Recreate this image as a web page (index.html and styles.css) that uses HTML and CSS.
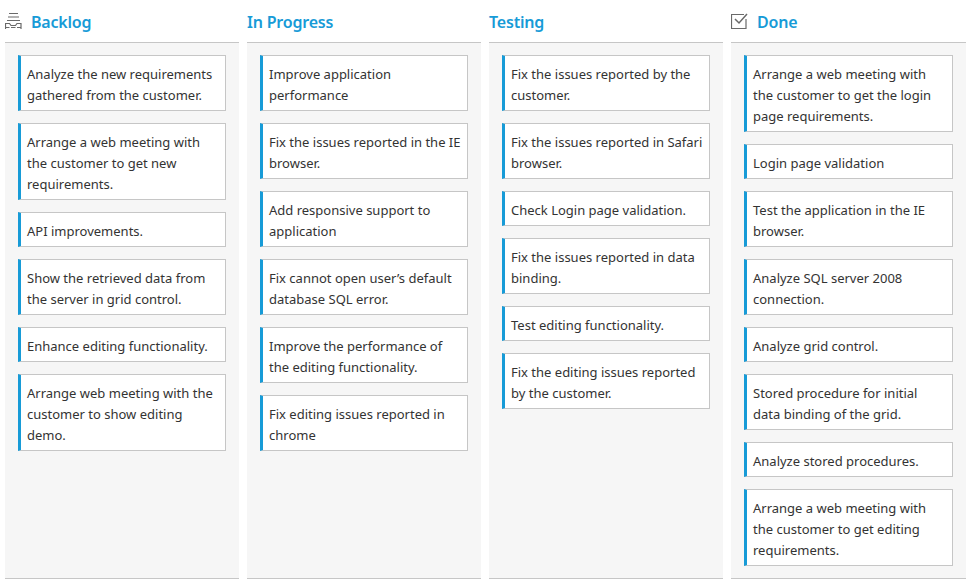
FILE: index.html
```
<!DOCTYPE html>
<html lang="en">
<head>
<meta charset="utf-8">
<title>Kanban board</title>
<link rel="stylesheet" href="styles.css">
</head>
<body>
<main class="board">
  <section class="column">
    <h2 class="title"><svg class="icon" width="18" height="18" viewBox="0 0 18 18"><path d="M4 .5h9M3 4h11M2 7.500h13M.5 16v-5.500h4l1.500 2h4.500l1.500-2h4v5.500M.5 14.500h4M12 14.500h4M6 14.500h4.500"/></svg>Backlog</h2>
    <div class="cards">
      <article class="card">Analyze the new requirements<br>gathered from the customer.</article>
      <article class="card">Arrange a web meeting with<br>the customer to get new<br>requirements.</article>
      <article class="card">API improvements.</article>
      <article class="card">Show the retrieved data from<br>the server in grid control.</article>
      <article class="card">Enhance editing functionality.</article>
      <article class="card">Arrange web meeting with the<br>customer to show editing<br>demo.</article>
    </div>
  </section>
  <section class="column">
    <h2 class="title">In Progress</h2>
    <div class="cards">
      <article class="card">Improve application<br>performance</article>
      <article class="card">Fix the issues reported in the IE<br>browser.</article>
      <article class="card">Add responsive support to<br>application</article>
      <article class="card">Fix cannot open user’s default<br>database SQL error.</article>
      <article class="card">Improve the performance of<br>the editing functionality.</article>
      <article class="card">Fix editing issues reported in<br>chrome</article>
    </div>
  </section>
  <section class="column">
    <h2 class="title">Testing</h2>
    <div class="cards">
      <article class="card">Fix the issues reported by the<br>customer.</article>
      <article class="card">Fix the issues reported in Safari<br>browser.</article>
      <article class="card">Check Login page validation.</article>
      <article class="card">Fix the issues reported in data<br>binding.</article>
      <article class="card">Test editing functionality.</article>
      <article class="card">Fix the editing issues reported<br>by the customer.</article>
    </div>
  </section>
  <section class="column">
    <h2 class="title"><svg class="icon" width="18" height="18" viewBox="0 0 18 18"><path d="M13 1.500H.5v14h14.500V6"/><path class="tick" d="M4 6l4 4L16 1"/></svg>Done</h2>
    <div class="cards">
      <article class="card">Arrange a web meeting with<br>the customer to get the login<br>page requirements.</article>
      <article class="card">Login page validation</article>
      <article class="card">Test the application in the IE<br>browser.</article>
      <article class="card">Analyze SQL server 2008<br>connection.</article>
      <article class="card">Analyze grid control.</article>
      <article class="card">Stored procedure for initial<br>data binding of the grid.</article>
      <article class="card">Analyze stored procedures.</article>
      <article class="card">Arrange a web meeting with<br>the customer to get editing<br>requirements.</article>
    </div>
  </section>
</main>
</body>
</html>
```
FILE: styles.css
```
* { box-sizing: border-box; }
body {
  margin: 0;
  background: #fff;
  color: #333;
  font-family: "Segoe UI", "Noto Sans", sans-serif;
}
.board {
  display: grid;
  grid-template-columns: 234px 234px 234px 235px;
  column-gap: 8px;
  height: 579px;
  padding-left: 5px;
}
.column {
  display: flex;
  flex-direction: column;
}
.title {
  display: flex;
  align-items: center;
  height: 42px;
  margin: 0;
  padding-top: 2px;
  color: #179bd7;
  font-size: 16px;
  font-weight: 600;
  letter-spacing: -0.2px;
}
.icon {
  flex: none;
  margin-right: 8px;
  fill: none;
  stroke: #6a6a6a;
  stroke-width: 1.2;
}
.tick { stroke-width: 1.5; }
.cards {
  display: flex;
  flex: 1;
  flex-direction: column;
  gap: 12px;
  padding: 12px 13px;
  border-top: 1px solid #c6c6c6;
  border-bottom: 1px solid #c6c6c6;
  background: #f6f6f6;
}
.card {
  padding: 8px 0 4px 6px;
  border: 1px solid #c6c6c6;
  border-left: 3px solid #179bd7;
  background: #fff;
  font-size: 13px;
  line-height: 21px;
  white-space: nowrap;
}
```
